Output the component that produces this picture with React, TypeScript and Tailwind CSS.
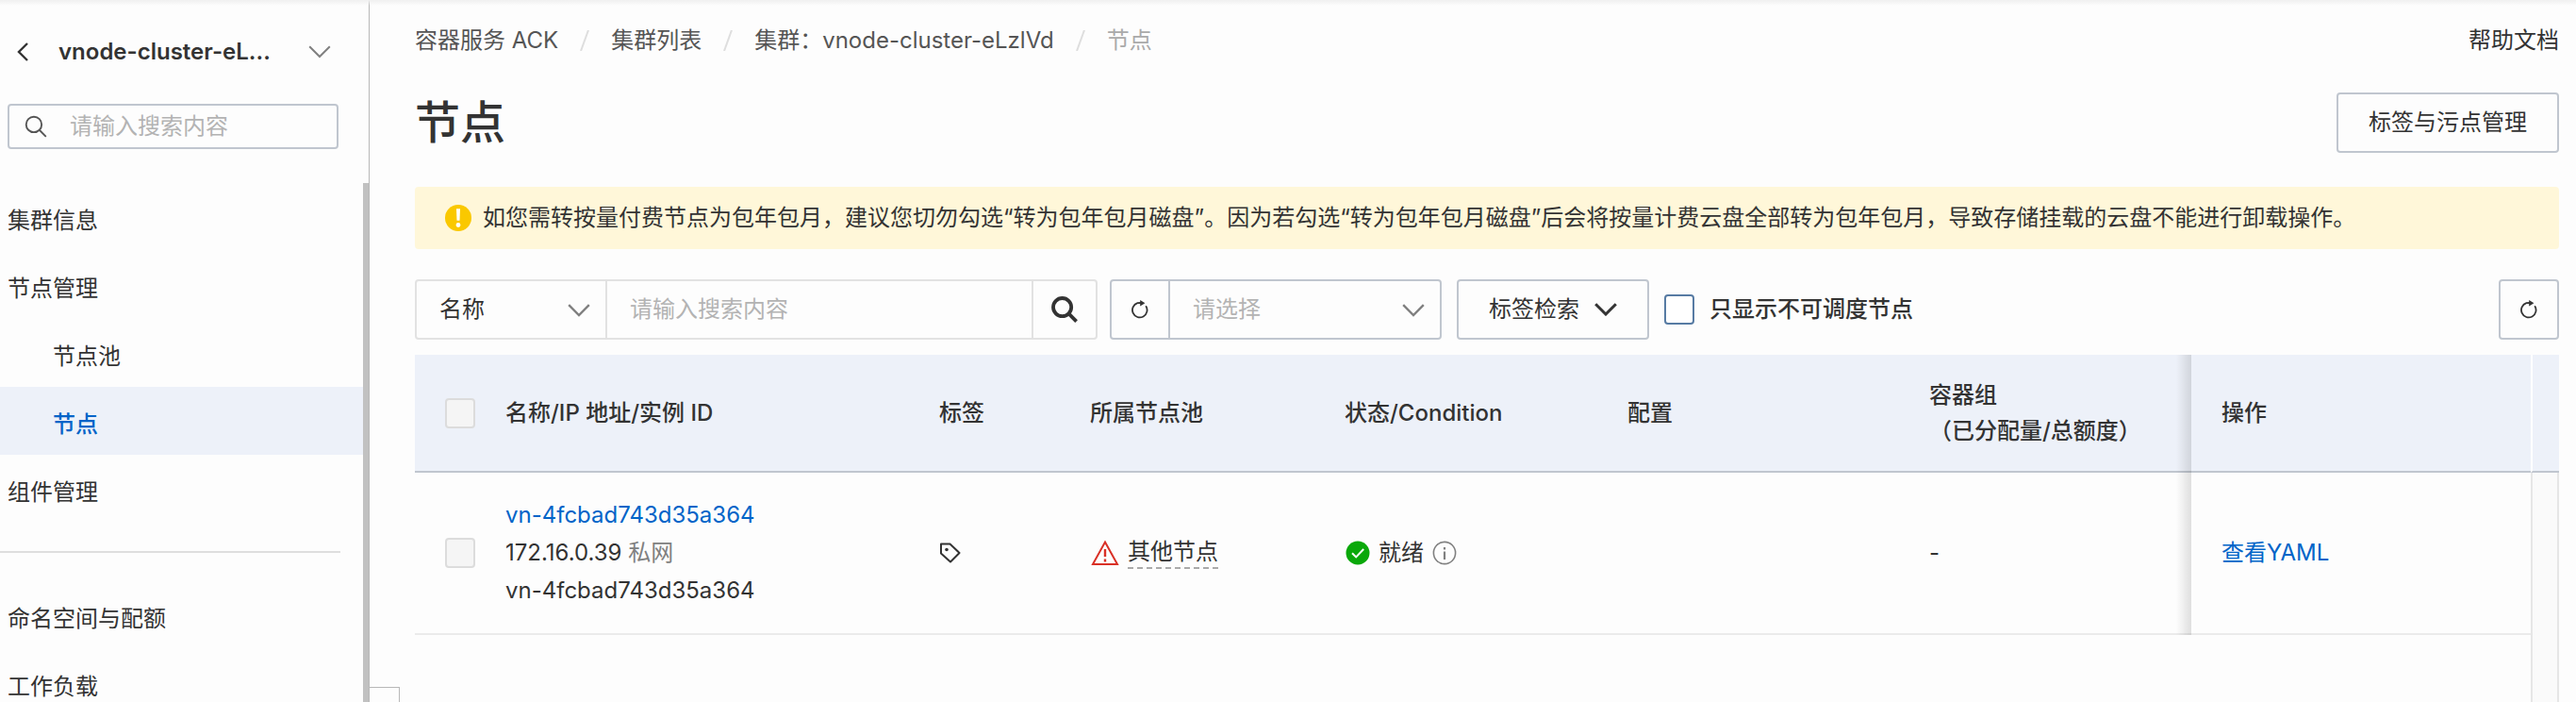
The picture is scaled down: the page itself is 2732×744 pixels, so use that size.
import { useState } from 'react';
import type { ReactNode } from 'react';

const menuTop = [
  { label: '集群信息' },
  { label: '节点管理' },
  { label: '节点池', nested: true },
  { label: '节点', nested: true, active: true },
  { label: '组件管理' },
];

const menuBottom = ['命名空间与配额', '工作负载'];

const crumbs = ['容器服务 ACK', '集群列表', '集群：vnode-cluster-eLzlVd'];

function ChevronDown({ className = '' }: { className?: string }) {
  return (
    <svg viewBox="0 0 24 14" className={`h-[14px] w-6 shrink-0 ${className}`} fill="none" stroke="currentColor" aria-hidden="true">
      <path d="M1.2 1.2 12 12 22.8 1.2" />
    </svg>
  );
}

function RefreshIcon() {
  return (
    <svg viewBox="0 0 20 20" className="size-5" fill="none" stroke="currentColor" strokeWidth="1.8" aria-hidden="true">
      <path d="M16.2 6.2A7.8 7.8 0 1 1 7.4 3.2L11.4 3" />
      <path d="M10.2 0 15.4 3.2 10.2 6.4Z" fill="currentColor" stroke="none" />
    </svg>
  );
}

function SearchIcon({ className = '' }: { className?: string }) {
  return (
    <svg viewBox="0 0 28 28" className={className} fill="none" stroke="currentColor" aria-hidden="true">
      <circle cx="11.6" cy="11.6" r="9.6" />
      <path d="m18.4 18.4 8.2 8.2" />
    </svg>
  );
}

function Th({ children }: { children?: ReactNode }) {
  return <th className="border-b-2 border-[#c0c6cf] bg-[#edf1f9] pl-8 text-left font-medium">{children}</th>;
}

function Sidebar() {
  return (
    <aside className="flex w-[392px] shrink-0 flex-col border-r border-[#b8b8b8]">
      <div className="flex h-[110px] shrink-0 items-center pr-10 pl-[18px]">
        <button aria-label="返回">
          <svg viewBox="0 0 12 20" className="h-5 w-3" fill="none" stroke="currentColor" strokeWidth="2.4" aria-hidden="true">
            <path d="M11 1 2 10l9 9" />
          </svg>
        </button>
        <button className="ml-8 flex flex-1 items-center justify-between font-semibold">
          vnode-cluster-eL...
          <ChevronDown className="stroke-2 text-[#808080]" />
        </button>
      </div>

      <label className="mr-8 ml-2 flex h-12 shrink-0 items-center gap-6 rounded-[4px] border-2 border-[#c0c6cf] pl-4">
        <SearchIcon className="size-6 shrink-0 stroke-[2.2] text-[#555]" />
        <input aria-label="搜索菜单" placeholder="请输入搜索内容" className="w-full min-w-0 outline-none placeholder:text-[#b3b3b3]" />
      </label>

      <div className="mt-9 flex min-h-0 flex-1">
        <nav className="flex-1">
          {menuTop.map((item) => (
            <a
              key={item.label}
              href="#"
              className={`flex h-[72px] items-center pt-2 ${item.nested ? 'pl-14' : 'pl-2'} ${
                item.active ? 'bg-[#edf1f9] font-medium text-[#0064c8]' : ''
              }`}
            >
              {item.label}
            </a>
          ))}
          <hr className="my-[30px] mr-6 border-t-2 border-[#dedede]" />
          {menuBottom.map((label) => (
            <a key={label} href="#" className="flex h-[72px] items-center pt-2 pl-2">
              {label}
            </a>
          ))}
        </nav>
        <div className="w-[6px] bg-[#c1c1c1]" />
      </div>
    </aside>
  );
}

function Toolbar() {
  const [onlyUnschedulable, setOnlyUnschedulable] = useState(false);

  return (
    <div className="mt-8 flex h-16 items-center">
      <div className="flex h-full w-[724px] rounded-[4px] border-2 border-[#e2e2e2]">
        <div className="relative w-[202px] shrink-0 border-r-2 border-[#e2e2e2]">
          <select aria-label="搜索字段" className="h-full w-full appearance-none pl-6 outline-none">
            <option>名称</option>
          </select>
          <ChevronDown className="pointer-events-none absolute top-6 right-4 stroke-[2.4] text-[#808080]" />
        </div>
        <input aria-label="搜索节点" placeholder="请输入搜索内容" className="min-w-0 flex-1 px-6 outline-none placeholder:text-[#b3b3b3]" />
        <button aria-label="搜索" className="flex w-[68px] shrink-0 items-center justify-center border-l-2 border-[#e2e2e2]">
          <SearchIcon className="size-7 stroke-[3.8]" />
        </button>
      </div>

      <div className="ml-[13px] flex h-full w-[352px] rounded-[4px] border-2 border-[#c0c6cf]">
        <button aria-label="刷新标签" className="flex w-[62px] shrink-0 items-center justify-center border-r-2 border-[#c0c6cf]">
          <RefreshIcon />
        </button>
        <div className="relative flex-1">
          <select aria-label="标签" className="h-full w-full appearance-none pl-6 text-[#b3b3b3] outline-none">
            <option>请选择</option>
          </select>
          <ChevronDown className="pointer-events-none absolute top-6 right-4 stroke-[2.4] text-[#808080]" />
        </div>
      </div>

      <button className="ml-4 flex h-full items-center gap-4 rounded-[4px] border-2 border-[#c0c6cf] px-8">
        标签检索
        <ChevronDown className="stroke-3" />
      </button>

      <input
        id="unschedulable"
        type="checkbox"
        checked={onlyUnschedulable}
        onChange={(e) => setOnlyUnschedulable(e.target.checked)}
        className="ml-4 size-8 appearance-none rounded-[4px] border-2 border-[#577ba3] bg-white checked:bg-[#0064c8]"
      />
      <label htmlFor="unschedulable" className="ml-4 font-medium">
        只显示不可调度节点
      </label>

      <button aria-label="刷新" className="ml-auto flex size-16 items-center justify-center rounded-[4px] border-2 border-[#c0c6cf]">
        <RefreshIcon />
      </button>
    </div>
  );
}

function NodeTable() {
  return (
    <div className="mt-4 flex flex-1">
      <div className="flex-1">
        <table className="w-full table-fixed border-separate border-spacing-0">
          <colgroup>
            <col className="w-16" />
            <col />
            <col className="w-40" />
            <col className="w-[270px]" />
            <col className="w-[300px]" />
            <col className="w-80" />
            <col className="w-[310px]" />
            <col className="w-[360px]" />
          </colgroup>
          <thead>
            <tr className="h-[125px] leading-[38px]">
              <Th>
                <input type="checkbox" disabled aria-label="全选" className="block size-8 appearance-none rounded-[4px] border-2 border-[#dcdcdc] bg-[#f5f5f5]" />
              </Th>
              <Th>名称/IP 地址/实例 ID</Th>
              <Th>标签</Th>
              <Th>所属节点池</Th>
              <Th>状态/Condition</Th>
              <Th>配置</Th>
              <Th>
                容器组
                <br />
                （已分配量/总额度）
              </Th>
              <th className="relative border-b-2 border-[#c0c6cf] bg-[#edf1f9] pl-8 text-left font-medium">
                <span className="absolute top-0 right-full -bottom-[2px] w-4 bg-linear-to-l from-black/12 to-transparent" />
                操作
              </th>
            </tr>
          </thead>
          <tbody>
            <tr className="h-[172px] leading-10 *:border-b-2 *:border-[#ebebeb] *:pl-8">
              <td>
                <input type="checkbox" disabled aria-label="选择节点" className="block size-8 appearance-none rounded-[4px] border-2 border-[#dcdcdc] bg-[#f5f5f5]" />
              </td>
              <td>
                <a href="#" className="block text-[#0064c8]">vn-4fcbad743d35a364</a>
                <div>
                  172.16.0.39 <span className="text-[#808080]">私网</span>
                </div>
                <div>vn-4fcbad743d35a364</div>
              </td>
              <td>
                <button aria-label="编辑标签" className="block">
                  <svg viewBox="0 0 24 24" className="size-6" fill="none" stroke="currentColor" strokeWidth="2" strokeLinejoin="round">
                    <path d="M2 2.5h9.5L21.5 12 12 21.5 2 12.5Z" />
                    <circle cx="8" cy="8.5" r="1.8" fill="currentColor" stroke="none" />
                  </svg>
                </button>
              </td>
              <td>
                <div className="flex items-center gap-2">
                  <svg viewBox="0 0 32 28" className="h-7 w-8" fill="none" stroke="#d93026" strokeWidth="2" aria-hidden="true">
                    <path d="M16 2.5 29 26H3Z" />
                    <path d="M16 10v8M16 20.5v3" strokeWidth="2.4" />
                  </svg>
                  <span className="border-b-2 border-dashed border-[#aaa] leading-8">其他节点</span>
                </div>
              </td>
              <td>
                <div className="flex items-center gap-2">
                  <svg viewBox="0 0 28 28" className="size-7" fill="none" aria-hidden="true">
                    <circle cx="14" cy="14" r="12.5" fill="#0aa80a" />
                    <path d="m8 14.2 4.2 4.2 8-8.4" stroke="#fff" strokeWidth="2" />
                  </svg>
                  就绪
                  <svg viewBox="0 0 28 28" className="size-7" fill="none" stroke="#808080" strokeWidth="1.6" aria-hidden="true">
                    <circle cx="14" cy="14" r="11.6" />
                    <path d="M14 12.5V21M14 8v2.4" strokeWidth="2.2" />
                  </svg>
                </div>
              </td>
              <td />
              <td>-</td>
              <td className="relative">
                <span className="absolute top-0 right-full -bottom-[2px] w-4 bg-linear-to-l from-black/12 to-transparent" />
                <a href="#" className="text-[#0064c8]">查看YAML</a>
              </td>
            </tr>
          </tbody>
        </table>
      </div>

      {/* vertical scrollbar track */}
      <div className="flex w-[30px] shrink-0 flex-col">
        <div className="h-[125px] border-b-2 border-l-2 border-b-[#c0c6cf] border-l-white bg-[#edf1f9]" />
        <div className="flex-1 border-x-2 border-[#e6e6e6] bg-[#fafafa]" />
      </div>
    </div>
  );
}

export default function App() {
  return (
    <div className="relative flex h-screen overflow-hidden bg-[#fdfdfd] font-['Inter','Noto_Sans_CJK_SC',sans-serif] text-2xl text-[#333]">
      <div className="absolute inset-x-0 top-0 h-[6px] bg-linear-to-b from-[#f0f0f0] to-transparent" />
      <Sidebar />

      <main className="relative flex min-w-0 flex-1 flex-col pr-[18px] pl-12">
        <div className="flex h-[86px] items-center justify-between">
          <nav className="flex items-center gap-[23px] text-[#555]">
            {crumbs.map((crumb) => (
              <span key={crumb} className="flex items-center gap-[23px]">
                <a href="#">{crumb}</a>
                <svg viewBox="0 0 10 22" className="h-[22px] w-[10px]" stroke="#dedede" strokeWidth="2" aria-hidden="true">
                  <path d="M9 0 1 22" />
                </svg>
              </span>
            ))}
            <span className="text-[#aaa]">节点</span>
          </nav>
          <a href="#">帮助文档</a>
        </div>

        <div className="mt-3 flex h-16 items-center justify-between">
          <h1 className="text-5xl font-medium">节点</h1>
          <button className="h-full rounded-[4px] border-2 border-[#c0c6cf] px-8">标签与污点管理</button>
        </div>

        <div className="mt-9 flex h-[66px] items-center gap-3 rounded-[4px] bg-[#fff7d9] px-8">
          <svg viewBox="0 0 28 28" className="size-7 shrink-0" aria-hidden="true">
            <circle cx="14" cy="14" r="14" fill="#fac800" />
            <path d="M12 4.2h4l-.5 12.6h-3Z" fill="#fff" />
            <circle cx="14" cy="21.5" r="2.4" fill="#fff" />
          </svg>
          <p>
            如您需转按量付费节点为包年包月，建议您切勿勾选“转为包年包月磁盘”。因为若勾选“转为包年包月磁盘”后会将按量计费云盘全部转为包年包月，导致存储挂载的云盘不能进行卸载操作。
          </p>
        </div>

        <Toolbar />
        <NodeTable />

        <div className="absolute bottom-0 left-0 h-4 w-8 border-t border-r border-[#b8b8b8]" />
      </main>
    </div>
  );
}
